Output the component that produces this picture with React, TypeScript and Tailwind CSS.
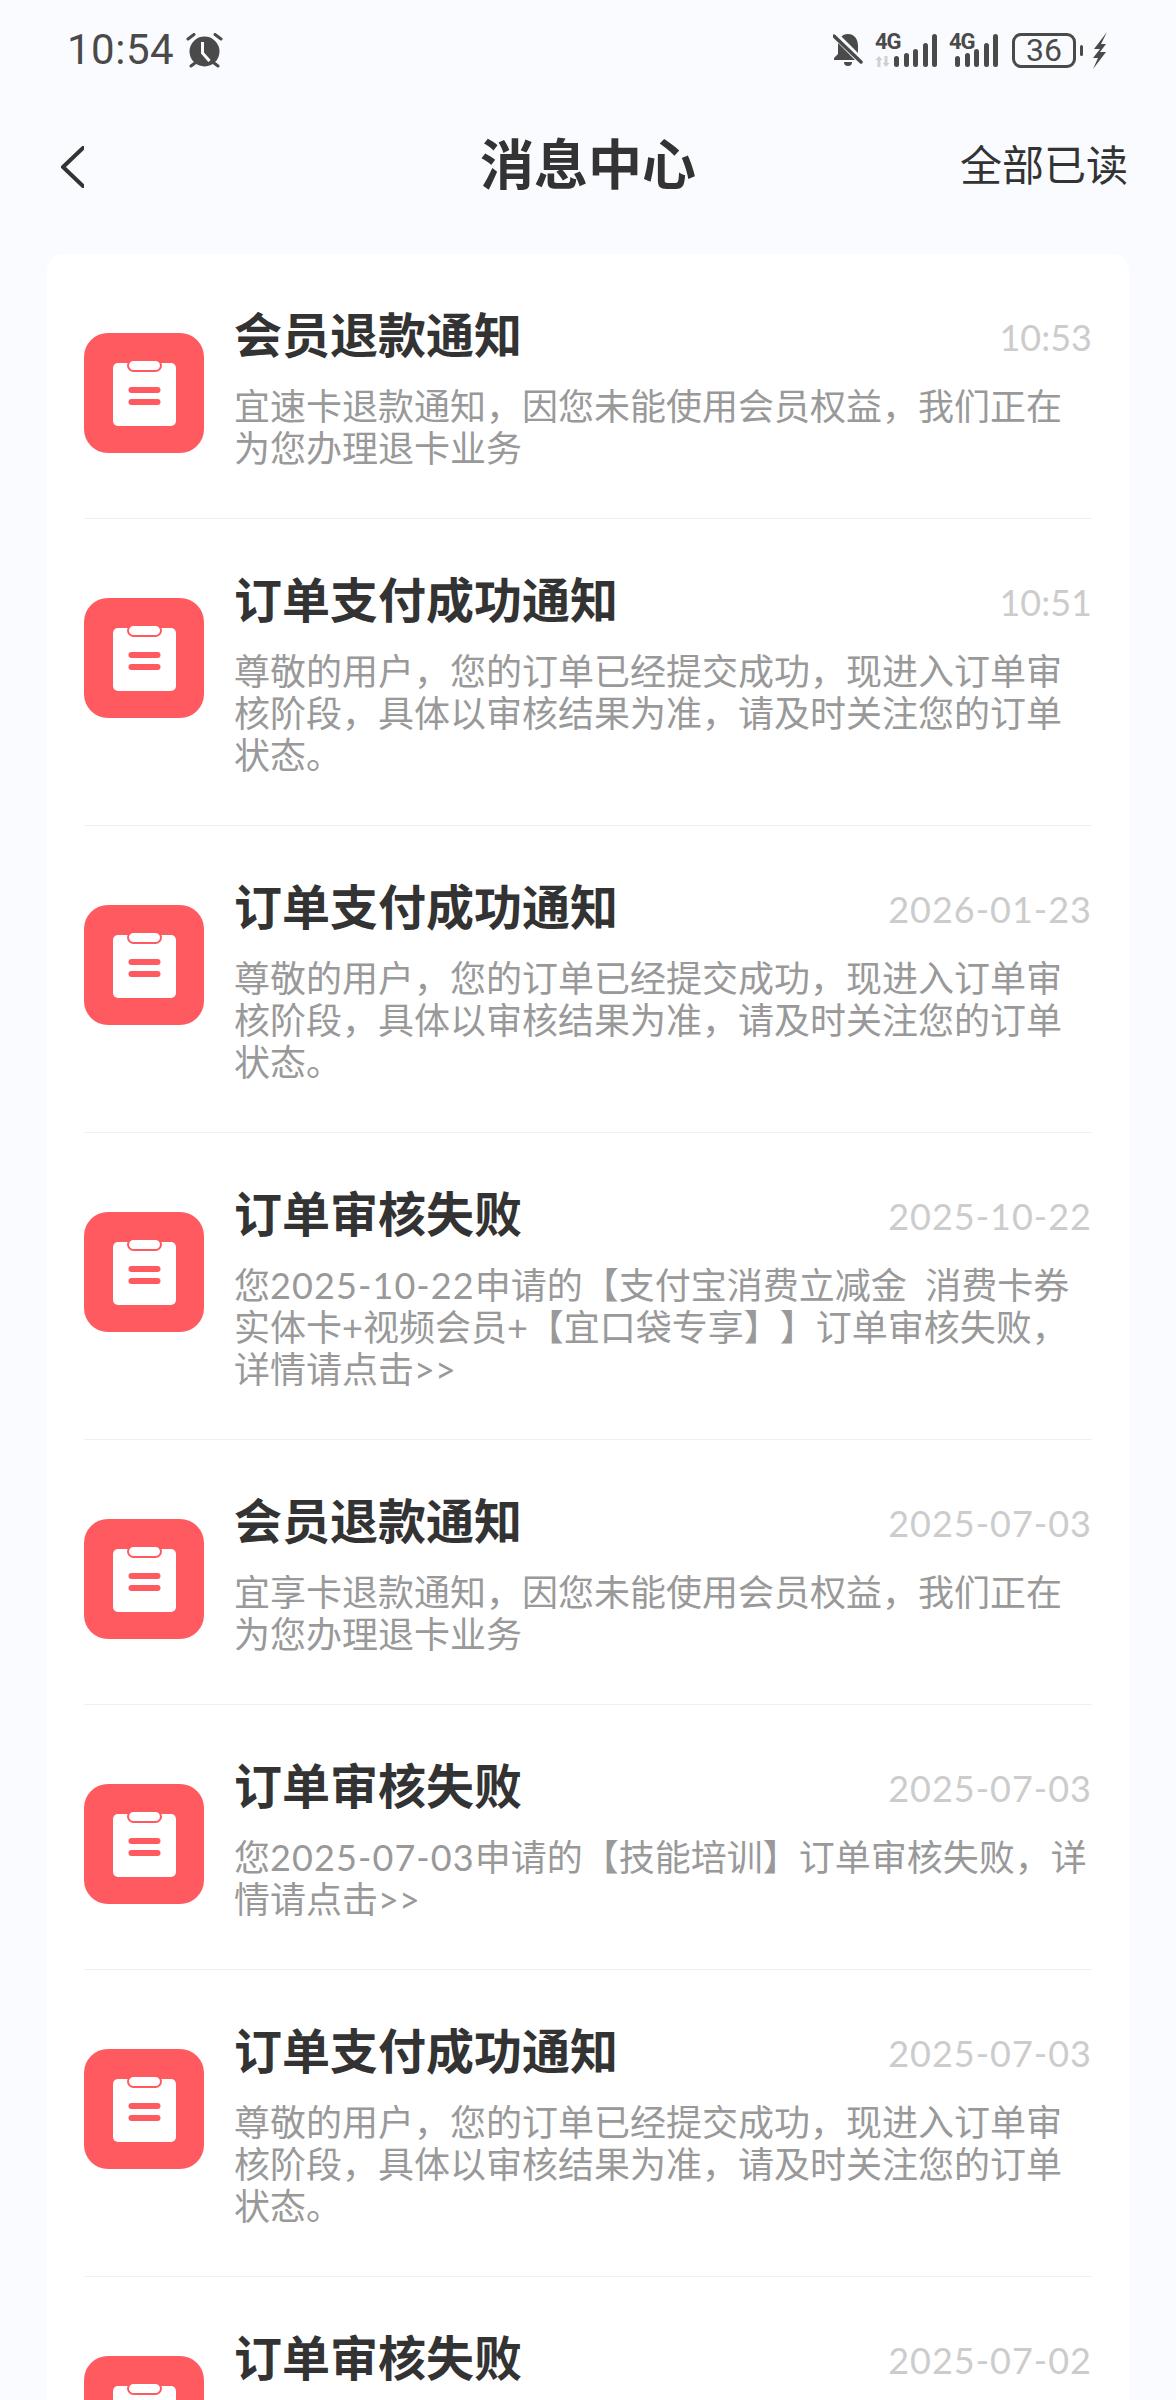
const FONT = "font-['Roboto','Noto_Sans_CJK_SC',sans-serif]"

const MESSAGES = [
    { title: '会员退款通知', time: '10:53', body: '宜速卡退款通知，因您未能使用会员权益，我们正在为您办理退卡业务' },
    { title: '订单支付成功通知', time: '10:51', body: '尊敬的用户，您的订单已经提交成功，现进入订单审核阶段，具体以审核结果为准，请及时关注您的订单状态。' },
    { title: '订单支付成功通知', time: '2026-01-23', body: '尊敬的用户，您的订单已经提交成功，现进入订单审核阶段，具体以审核结果为准，请及时关注您的订单状态。' },
    { title: '订单审核失败', time: '2025-10-22', body: '您2025-10-22申请的【支付宝消费立减金\u00a0\u00a0消费卡券实体卡+视频会员+【宜口袋专享】】订单审核失败，详情请点击>>' },
    { title: '会员退款通知', time: '2025-07-03', body: '宜享卡退款通知，因您未能使用会员权益，我们正在为您办理退卡业务' },
    { title: '订单审核失败', time: '2025-07-03', body: '您2025-07-03申请的【技能培训】订单审核失败，详情请点击>>' },
    { title: '订单支付成功通知', time: '2025-07-03', body: '尊敬的用户，您的订单已经提交成功，现进入订单审核阶段，具体以审核结果为准，请及时关注您的订单状态。' },
    // the body of this one is below the fold
    { title: '订单审核失败', time: '2025-07-02', body: '' },
]

function ClipboardIcon() {
    return (
        <div className="mt-[26px] flex h-[120px] w-[120px] shrink-0 items-center justify-center rounded-[24px] bg-[#ff5a5f]">
            <svg width="63" height="66" viewBox="0 0 63 66">
                <rect x="0" y="3" width="63" height="63" rx="5" fill="#fff" />
                <rect x="15" y="0" width="33" height="11" rx="5.5" fill="#fff" stroke="#ff5a5f" strokeWidth="2" />
                <rect x="15.5" y="27" width="32" height="6" rx="3" fill="#ff5a5f" />
                <rect x="15.5" y="39" width="32" height="6" rx="3" fill="#ff5a5f" />
            </svg>
        </div>
    )
}

function AlarmIcon() {
    return (
        <svg width="37" height="35" viewBox="0 0 37 35" fill="none">
            <circle cx="18.5" cy="18.5" r="15" fill="#4a4a4a" />
            <path d="M16.5 9v11l7 8" stroke="#f9fbff" strokeWidth="3" />
            <path d="M2 6l6-4.500M35 6l-6-4.500M5 33l4-3M32 33l-4-3" stroke="#4a4a4a" strokeWidth="3" strokeLinecap="round" />
        </svg>
    )
}

function MutedBell() {
    return (
        <svg width="30" height="34" viewBox="0 0 30 34" fill="none">
            <path d="M15 1c7 0 10 6 10 12v8l4 4v2H1v-2l4-4v-8C5 7 8 1 15 1z" fill="#4a4a4a" />
            <path d="M11 29h8a4 4 0 0 1-8 0z" fill="#4a4a4a" />
            <path d="M0 0l30 30" stroke="#f9fbff" strokeWidth="7" />
            <path d="M1 3l27 26" stroke="#4a4a4a" strokeWidth="3.500" strokeLinecap="round" />
        </svg>
    )
}

function SignalBars({ arrows }: { arrows?: boolean }) {
    const bars = [11, 14, 18, 24, 33]
    return (
        <div className={`relative flex h-[33px] items-end justify-end gap-[4.400px] ${arrows ? 'w-[62px]' : 'w-[49px]'}`}>
            {arrows && (
                <svg className="absolute bottom-0 left-0" width="15" height="11" viewBox="0 0 15 11" fill="#d0d0d0">
                    <path d="M4 0l3.500 4H5.500v7h-3V4H.500zM11 11l-3.500-4h2V0h3v7h2z" />
                </svg>
            )}
            <span className="absolute left-0 top-[-3px] text-[22px] font-bold leading-[22px] tracking-[-1px] text-[#4a4a4a]">4G</span>
            {bars.map((h, i) => (
                <span key={i} className="w-[5px] rounded-full bg-[#4a4a4a]" style={{ height: h }} />
            ))}
        </div>
    )
}

function StatusBar() {
    return (
        <div className="flex h-[100px] items-center justify-between pl-[67px] pr-[69px] text-[#4a4a4a]">
            <div className="flex items-center gap-[12px]">
                <span className="text-[42px] leading-none tracking-[0.5px]">10:54</span>
                <AlarmIcon />
            </div>
            <div className="flex items-center">
                <MutedBell />
                <div className="ml-[12px]"><SignalBars arrows /></div>
                <div className="ml-[12px]"><SignalBars /></div>
                <div className="ml-[14px] flex items-center gap-[4px]">
                    <div className="flex h-[35px] w-[64px] items-center justify-center rounded-[9px] border-[3px] border-[#4a4a4a] text-[32px] leading-none">36</div>
                    <span className="h-[11px] w-[3px] rounded-full bg-[#4a4a4a]" />
                </div>
                <svg className="ml-[9px]" width="15" height="37" viewBox="0 0 15 37">
                    <path d="M15 0L2 17h6L1 26h5L1 37l13-17H8l6-8H9z" fill="#4a4a4a" />
                </svg>
            </div>
        </div>
    )
}

function Header() {
    return (
        <div className="grid h-[130px] grid-cols-[1fr_auto_1fr] items-center px-[48px] pt-[4px]">
            <svg className="ml-[12px]" width="24" height="42" viewBox="0 0 24 42" fill="none">
                <path d="M23 2L3 21l20 19" stroke="#333" strokeWidth="4" strokeLinecap="round" strokeLinejoin="round" />
            </svg>
            <h1 className="text-[54px] font-bold leading-none text-[#333]">消息中心</h1>
            <button className="justify-self-end text-[42px] leading-none text-[#333]">全部已读</button>
        </div>
    )
}

function MessageRow({ title, time, body }: { title: string; time: string; body: string }) {
    // dates inside the body run a little wider than the rest of the text
    const parts = body.split(/(\d{4}-\d{2}-\d{2})/)

    return (
        <div className="flex items-start gap-[30px] border-b border-[#f0f0f0] pb-[49px] pt-[53px]">
            <ClipboardIcon />
            <div className="min-w-0 flex-1">
                <div className="flex items-center justify-between">
                    <span className="text-[48px] font-bold leading-[60px] text-[#333]">{title}</span>
                    <span className={`font-['Lato',sans-serif] text-[36px] leading-[60px] text-[#ccc] ${time.length > 5 ? 'tracking-[1px]' : 'tracking-normal'}`}>{time}</span>
                </div>
                <p className="mt-[18px] font-['Lato','Noto_Sans_CJK_SC',sans-serif] text-[36px] leading-[42px] text-[#999] [text-spacing-trim:space-all]">
                    {parts.map((part, i) => (
                        <span key={i} className={i % 2 === 1 ? 'tracking-[1.1px]' : ''}>{part}</span>
                    ))}
                </p>
            </div>
        </div>
    )
}

export default function App() {
    return (
        <div className={`h-[2400px] overflow-hidden bg-[#f9fbff] ${FONT}`}>
            <StatusBar />
            <Header />
            <div className="mx-[47px] mt-[24px] rounded-t-[16px] bg-white px-[37px]">
                {MESSAGES.map((m, i) => (
                    <MessageRow key={i} {...m} />
                ))}
            </div>
        </div>
    )
}
